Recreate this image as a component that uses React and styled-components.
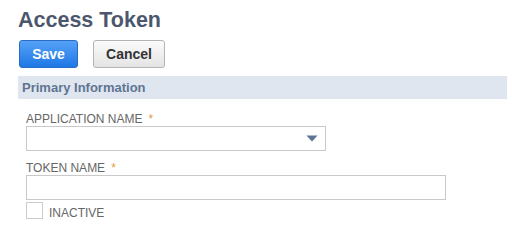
import React from "react";
import styled, { createGlobalStyle } from "styled-components";

const Global = createGlobalStyle`
  html, body { margin: 0; padding: 0; background: #fff; }
  body { font-family: "Liberation Sans", Arial, sans-serif; }
`;

const Page = styled.div`
  padding: 8px 0 0 18px;
`;

const Title = styled.h1`
  margin: 0;
  font-family: "Liberation Sans", Arial, sans-serif;
  font-size: 21.5px;
  line-height: 24px;
  font-weight: bold;
  color: #4c576d;
`;

const Toolbar = styled.div`
  display: flex;
  gap: 15px;
  margin: 8px 0 0 1px;
`;

const Button = styled.button`
  box-sizing: border-box;
  height: 28px;
  width: ${(p) => (p.$primary ? "59px" : "72px")};
  padding: 0;
  border-radius: 3px;
  font-family: "Liberation Sans", Arial, sans-serif;
  font-size: 14px;
  font-weight: bold;
  cursor: pointer;
  border: 1px solid ${(p) => (p.$primary ? "#2a6cc4" : "#b4b4b4")};
  color: ${(p) => (p.$primary ? "#fff" : "#333")};
  background: ${(p) =>
    p.$primary
      ? "linear-gradient(#55a1f7, #1f78e6)"
      : "linear-gradient(#fbfbfb, #e4e4e4)"};
`;

const SectionHeader = styled.div`
  margin-top: 8px;
  height: 23px;
  display: flex;
  align-items: center;
  padding-left: 4px;
  background: #e0e6ef;
  color: #5f7493;
  font-size: 13px;
  font-weight: bold;
`;

const Fields = styled.div`
  padding: 13px 0 0 8px;
  display: flex;
  flex-direction: column;
`;

const Field = styled.div`
  display: flex;
  flex-direction: column;
  margin-bottom: ${(p) => p.$gap || 0}px;
`;

const Label = styled.label`
  font-size: 12px;
  line-height: 14px;
  color: #666;
  text-transform: uppercase;
`;

const Req = styled.span`
  color: #e0a03c;
  margin-left: 6px;
  font-size: 12px;
`;

const Box = styled.div`
  box-sizing: border-box;
  width: ${(p) => p.$w}px;
  height: 25px;
  border: 1px solid #c9c9c9;
  background: #fff;
  display: flex;
  align-items: center;
  justify-content: flex-end;
  padding-right: 7px;
`;

const CheckRow = styled.div`
  display: flex;
  align-items: flex-end;
  gap: 6px;
  margin-top: 2px;
`;

const CheckBox = styled.span`
  box-sizing: border-box;
  width: 17px;
  height: 17px;
  border: 1px solid #cbcbcb;
  background: #fff;
`;

const CheckLabel = styled.span`
  font-size: 12px;
  line-height: 12px;
  color: #666;
  text-transform: uppercase;
`;

export default function App() {
  return (
    <>
      <Global />
      <Page>
        <Title>Access Token</Title>
        <Toolbar>
          <Button $primary>Save</Button>
          <Button>Cancel</Button>
        </Toolbar>
        <SectionHeader>Primary Information</SectionHeader>
        <Fields>
          <Field $gap={10}>
            <Label>
              Application Name<Req>*</Req>
            </Label>
            <Box $w={300}>
              <svg width="12" height="7" viewBox="0 0 12 7">
                <path d="M0.5 0.5 H11.5 L6.8 5.8 Q6 6.6 5.2 5.8 Z" fill="#5f7494" />
              </svg>
            </Box>
          </Field>
          <Field>
            <Label>
              Token Name<Req>*</Req>
            </Label>
            <Box $w={420} />
          </Field>
          <CheckRow>
            <CheckBox />
            <CheckLabel>Inactive</CheckLabel>
          </CheckRow>
        </Fields>
      </Page>
    </>
  );
}
